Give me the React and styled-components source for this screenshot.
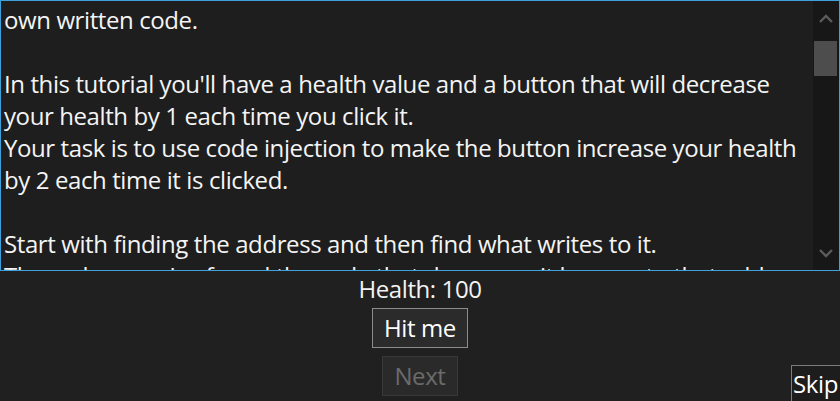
import styled, { createGlobalStyle } from 'styled-components'

const Global = createGlobalStyle`
  html, body {
    margin: 0;
    padding: 0;
    background: #202020;
    overflow: hidden;
  }
  body {
    font-family: 'Open Sans', 'Noto Sans', sans-serif;
    color: #f2f2f2;
  }
`

const Page = styled.div`
  width: 840px;
  height: 401px;
  display: flex;
  flex-direction: column;
  background: #202020;
`

const Memo = styled.div`
  height: 271px;
  box-sizing: border-box;
  border: 1px solid #3fa0dc;
  background: #1e1e1e;
  display: flex;
  overflow: hidden;
`

const MemoText = styled.div`
  flex: 1;
  padding: 3px 0 0 3px;
  font-size: 24px;
  line-height: 32px;
  letter-spacing: -0.4px;
  color: #f4f4f4;
  overflow: hidden;
`

const Line = styled.div`
  white-space: pre;
  height: 32px;
`

const ScrollBar = styled.div`
  width: 26px;
  background: #171717;
  display: flex;
  flex-direction: column;
`

const Arrow = styled.div`
  height: 34px;
  display: flex;
  align-items: center;
  justify-content: center;
`

const Thumb = styled.div`
  width: 23px;
  height: 35px;
  margin: 6px 0 0 1px;
  background: #4d4d4d;
`

const Spacer = styled.div`
  flex: 1;
`

const Bottom = styled.div`
  flex: 1;
  display: grid;
  grid-template-columns: 1fr auto 1fr;
`

const Center = styled.div`
  display: flex;
  flex-direction: column;
  align-items: center;
`

const Label = styled.div`
  font-size: 24px;
  line-height: 32px;
  letter-spacing: -0.4px;
  margin-top: 2px;
`

const Button = styled.button`
  font-family: inherit;
  font-size: 24px;
  letter-spacing: -0.4px;
  height: 40px;
  box-sizing: border-box;
  padding: 0 ${(p) => p.$pad || 10}px;
  margin-top: ${(p) => p.$top || 0}px;
  background: ${(p) => (p.disabled ? '#2a2a2a' : '#2b2b2b')};
  color: ${(p) => (p.disabled ? '#6b6b6b' : '#ffffff')};
  border: 1px solid ${(p) => (p.disabled ? '#383838' : '#8c8c8c')};
  border-radius: 0;
  line-height: 1;
`

const Right = styled.div`
  display: flex;
  justify-content: flex-end;
  align-items: flex-end;
`

const SkipButton = styled.button`
  font-family: inherit;
  font-size: 24px;
  letter-spacing: -0.4px;
  height: 36px;
  width: 49px;
  box-sizing: border-box;
  padding: 0 0 0 1px;
  background: #1d1d1d;
  color: #ffffff;
  border: 1px solid #7c7c7c;
  border-right: none;
  border-bottom: none;
  text-align: left;
  line-height: 1;
  white-space: nowrap;
  overflow: hidden;
`

const lines = [
  'own written code.',
  '',
  "In this tutorial you'll have a health value and a button that will decrease",
  'your health by 1 each time you click it.',
  'Your task is to use code injection to make the button increase your health',
  'by 2 each time it is clicked.',
  '',
  'Start with finding the address and then find what writes to it.',
  "Then when you've found the code that decreases it browse to that address",
]

const Chevron = ({ up }) => (
  <svg width="14" height="9" viewBox="0 0 14 9">
    <path
      d={up ? 'M1 8 L7 2 L13 8' : 'M1 1 L7 7 L13 1'}
      fill="none"
      stroke="#5c5c5c"
      strokeWidth="2.4"
    />
  </svg>
)

export default function App() {
  return (
    <>
      <Global />
      <Page>
        <Memo>
          <MemoText>
            {lines.map((l, i) => (
              <Line key={i}>{l}</Line>
            ))}
          </MemoText>
          <ScrollBar>
            <Arrow>
              <Chevron up />
            </Arrow>
            <Thumb />
            <Spacer />
            <Arrow>
              <Chevron />
            </Arrow>
          </ScrollBar>
        </Memo>
        <Bottom>
          <div />
          <Center>
            <Label>Health: 100</Label>
            <Button $top={3} $pad={11}>Hit me</Button>
            <Button $top={8} $pad={11} disabled>
              Next
            </Button>
          </Center>
          <Right>
            <SkipButton>Skip</SkipButton>
          </Right>
        </Bottom>
      </Page>
    </>
  )
}
